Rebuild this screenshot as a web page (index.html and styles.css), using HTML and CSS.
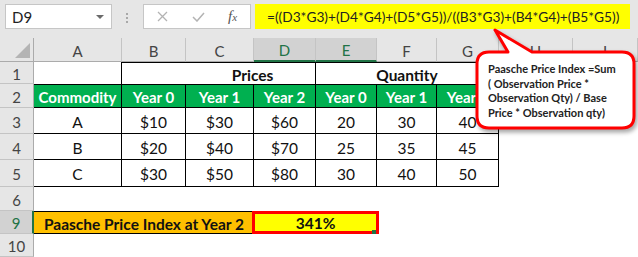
FILE: index.html
```html
<!DOCTYPE html>
<html>
<head>
	<meta charset="utf-8" />
	<title>Paasche Price Index</title>
	<link rel="stylesheet" href="styles.css">
</head>
<body>
	<div class="bar">
		<div class="namebox"><span class="ref">D9</span><span class="caret"></span></div>
		<svg class="dots" width="31" height="25" viewBox="0 0 31 25">
			<rect x="14" y="9" width="2" height="2" fill="#a8a8a8"/>
			<rect x="14" y="13" width="2" height="2" fill="#a8a8a8"/>
			<rect x="14" y="17" width="2" height="2" fill="#a8a8a8"/>
		</svg>
		<div class="fxbox">
			<svg class="ico-x" width="11" height="11" viewBox="0 0 11 11">
				<path d="M1 1 L10 10 M10 1 L1 10" stroke="#b3b3b3" stroke-width="1.3" fill="none"/>
			</svg>
			<svg class="ico-ok" width="13" height="10" viewBox="0 0 13 10">
				<path d="M1 5 L5 9 L12 1" stroke="#b3b3b3" stroke-width="1.5" fill="none"/>
			</svg>
			<span class="fx">f<span class="fx-x">x</span></span>
		</div>
		<div class="formula"><span class="expr">=((D3*G3)+(D4*G4)+(D5*G5))/((B3*G3)+(B4*G4)+(B5*G5))</span></div>
	</div>

	<div class="sheet">
		<!-- column headers -->
		<div class="c corner"><span class="tri"></span></div>
		<div class="c hd">A</div>
		<div class="c hd">B</div>
		<div class="c hd">C</div>
		<div class="c hd sel">D</div>
		<div class="c hd sel">E</div>
		<div class="c hd">F</div>
		<div class="c hd">G</div>
		<div class="c hd">H</div>
		<div class="c hd">I</div>

		<!-- row 1 -->
		<div class="c rh">1</div>
		<div class="c edge"></div>
		<div class="c b t bold prices">Prices</div>
		<div class="c b t bold span3">Quantity</div>
		<div class="c"></div>
		<div class="c"></div>

		<!-- row 2 -->
		<div class="c rh">2</div>
		<div class="c b t head">Commodity</div>
		<div class="c b t head">Year 0</div>
		<div class="c b t head">Year 1</div>
		<div class="c b t head">Year 2</div>
		<div class="c b t head">Year 0</div>
		<div class="c b t head">Year 1</div>
		<div class="c b t head">Year 2</div>
		<div class="c"></div>
		<div class="c"></div>

		<!-- row 3 -->
		<div class="c rh">3</div>
		<div class="c b">A</div>
		<div class="c b">$10</div>
		<div class="c b">$30</div>
		<div class="c b">$60</div>
		<div class="c b">20</div>
		<div class="c b">30</div>
		<div class="c b">40</div>
		<div class="c"></div>
		<div class="c"></div>

		<!-- row 4 -->
		<div class="c rh">4</div>
		<div class="c b">B</div>
		<div class="c b">$20</div>
		<div class="c b">$40</div>
		<div class="c b">$70</div>
		<div class="c b">25</div>
		<div class="c b">35</div>
		<div class="c b">45</div>
		<div class="c"></div>
		<div class="c"></div>

		<!-- row 5 -->
		<div class="c rh">5</div>
		<div class="c b">C</div>
		<div class="c b">$30</div>
		<div class="c b">$50</div>
		<div class="c b">$80</div>
		<div class="c b">30</div>
		<div class="c b">40</div>
		<div class="c b">50</div>
		<div class="c"></div>
		<div class="c"></div>

		<!-- row 6 -->
		<div class="c rh">6</div>
		<div class="c blank"></div>

		<!-- row 9 -->
		<div class="c rh rsel">9</div>
		<div class="c label">Paasche Price Index at Year 2</div>
		<div class="c result">341%</div>
		<div class="c blank4"></div>

		<!-- row 10 -->
		<div class="c rh">10</div>
		<div class="c blank"></div>
	</div>

	<div class="callout">
		<svg class="bubble" width="168" height="110" viewBox="0 0 168 110">
			<path d="M19 26 L38 26 L25 4 L62 26 L152 26 Q164 26 164 38 L164 90 Q164 102 152 102 L19 102 Q7 102 7 90 L7 38 Q7 26 19 26 Z"
				fill="#fff" stroke="#f00" stroke-width="3" stroke-linejoin="round"/>
		</svg>
		<div class="note">Paasche Price Index =Sum<br>( Observation Price *<br>Observation Qty) / Base<br>Price * Observation qty)</div>
	</div>
</body>
</html>
```

FILE: styles.css
```css
body{
	margin: 0;
	width: 638px;
	height: 257px;
	overflow: hidden;
	position: relative;
	background: #fff;
	font-family: Lato, "Liberation Sans", sans-serif;
}

/* formula bar */
.bar{
	display: flex;
	align-items: flex-start;
	height: 38px;
	padding-top: 4px;
	box-sizing: border-box;
	background: #e6e6e6;
}
.namebox{
	display: flex;
	align-items: center;
	justify-content: space-between;
	margin-left: 5px;
	width: 107px;
	height: 25px;
	padding: 0 7px 0 6px;
	box-sizing: border-box;
	background: #fff;
	border: 1px solid #c6c6c6;
	font-size: 15px;
	color: #222;
}
.caret{
	width: 0;
	height: 0;
	border-left: 4px solid transparent;
	border-right: 4px solid transparent;
	border-top: 4px solid #6a6a6a;
}
.fxbox{
	display: flex;
	align-items: center;
	width: 108px;
	height: 25px;
	padding-left: 13px;
	box-sizing: border-box;
	background: #fff;
	border: 1px solid #c6c6c6;
}
.ico-ok{
	margin-left: 24px;
}
.fx{
	margin-left: 23px;
	font-family: "Liberation Serif", serif;
	font-style: italic;
	font-size: 15px;
	color: #555;
}
.fx-x{
	font-size: 11px;
}
.formula{
	display: flex;
	align-items: center;
	margin-left: 4px;
	width: 375px;
	height: 25px;
	padding-left: 12px;
	box-sizing: border-box;
	background: #ffff00;
	font-size: 13.7px;
	color: #222;
}

/* sheet */
.sheet{
	display: grid;
	grid-template-columns: 34px 88px 64px 68px 62px 61px 60px 62px 74px 65px;
	grid-template-rows: 24px 22px 24px 26px 26px 27px 24px 23px 23px;
	font-size: 15.5px;
	color: #111;
}
.c{
	display: flex;
	align-items: center;
	justify-content: center;
	box-sizing: border-box;
	padding-top: 2px;
}
.corner{
	align-items: flex-end;
	justify-content: flex-end;
	padding: 0 3px 3px 0;
	background: #e6e6e6;
	border-right: 1px solid #ababab;
	border-bottom: 1px solid #ababab;
}
.tri{
	width: 0;
	height: 0;
	border-left: 15px solid transparent;
	border-bottom: 15px solid #b4b4b4;
}
.hd{
	background: #e6e6e6;
	border-right: 1px solid #c4c4c4;
	border-bottom: 1px solid #ababab;
	color: #444;
	font-size: 15px;
}
.hd.sel{
	background: #d2d2d2;
	border-bottom: 2px solid #217346;
	color: #217346;
}
.rh{
	background: #e6e6e6;
	border-right: 1px solid #ababab;
	border-bottom: 1px solid #c4c4c4;
	color: #444;
	font-size: 15px;
}
.rh.rsel{
	background: #d2d2d2;
	border-right: 2px solid #217346;
	color: #217346;
}
.b{
	border-right: 1px solid #000;
	border-bottom: 1px solid #000;
}
.t{
	border-top: 1px solid #000;
}
.edge{
	border-right: 1px solid #000;
}
.bold{
	font-weight: bold;
}
.prices{
	grid-column: span 3;
	padding-left: 68px;
	border-bottom: none;
}
.span3{
	grid-column: span 3;
	border-bottom: none;
}
.head{
	background: #00b050;
	color: #fff;
	font-weight: bold;
	font-size: 15px;
}
.blank{
	grid-column: span 9;
}
.blank4{
	grid-column: span 4;
}
.label{
	grid-column: span 3;
	background: #ffc000;
	border-top: 1px solid #000;
	border-bottom: 1px solid #000;
	font-weight: bold;
}
.result{
	grid-column: span 2;
	margin: 0 -2px;
	position: relative;
	padding-top: 0;
	background: #ffff00;
	border: 3px solid #f00;
	font-weight: bold;
}
.result::after{
	content: "";
	position: absolute;
	right: 0;
	bottom: -3px;
	width: 4px;
	height: 4px;
	background: #217346;
}

/* comment bubble */
.callout{
	position: absolute;
	left: 470px;
	top: 26px;
	width: 168px;
	height: 110px;
}
.bubble{
	display: block;
	filter: drop-shadow(2px 3px 2px rgba(0,0,0,0.35));
}
.note{
	position: absolute;
	left: 18px;
	top: 36px;
	font-size: 11px;
	line-height: 14.5px;
	font-weight: bold;
	color: #222;
	white-space: nowrap;
}
```
